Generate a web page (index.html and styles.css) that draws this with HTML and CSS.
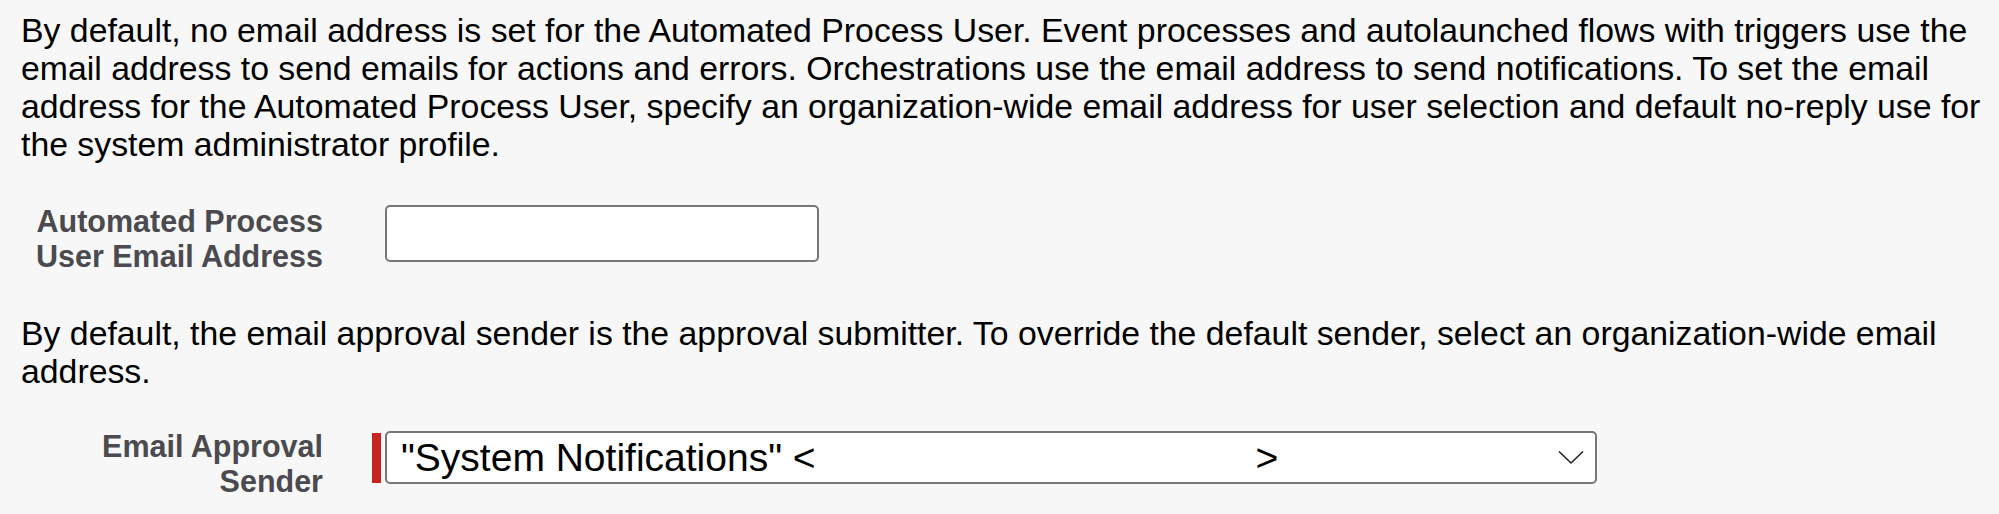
FILE: index.html
```html
<!DOCTYPE html>
<html lang="en">
<head>
  <meta charset="UTF-8" />
  <title>Organization Email Settings</title>
  <link rel="stylesheet" href="styles.css">
</head>
<body>
  <div class="settings">
    <p class="help">By default, no email address is set for the Automated Process User. Event processes and autolaunched flows with triggers use the email address to send emails for actions and errors. Orchestrations use the email address to send notifications. To set the email address for the Automated Process User, specify an organization-wide email address for user selection and default no-reply use for the system administrator profile.</p>

    <div class="field-row">
      <label class="field-label" for="apuEmail">Automated Process User Email Address</label>
      <div class="field-control">
        <input type="text" id="apuEmail" class="text-input">
      </div>
    </div>

    <p class="help">By default, the email approval sender is the approval submitter. To override the default sender, select an organization-wide email address.</p>

    <div class="field-row">
      <label class="field-label">Email Approval Sender</label>
      <div class="field-control required">
        <span class="required-bar"></span>
        <div class="select-box">
          <span class="select-value">"System Notifications" &lt;<span class="addr"></span>&gt;</span>
          <svg class="chevron" width="26" height="15" viewBox="0 0 26 15">
            <path d="M1 1.5 L13 13 L25 1.5" fill="none" stroke="#222" stroke-width="1.6"/>
          </svg>
        </div>
      </div>
    </div>
  </div>
</body>
</html>
```

FILE: styles.css
```css
* { box-sizing: border-box; }
body {
  margin: 0;
  background: #f7f7f7;
  color: #000;
  font-family: "Liberation Sans", Arial, sans-serif;
}
.settings {
  padding: 11px 0 0 21px;
}
.help {
  margin: 0;
  width: 1978px;
  font-size: 33.8px;
  line-height: 38px;
}
.field-row {
  display: flex;
  align-items: flex-start;
  margin: 41px 0 40px;
}
.field-row:last-child {
  margin-top: 39px;
}
.field-label {
  width: 302px;
  text-align: right;
  font-weight: bold;
  font-size: 30.5px;
  line-height: 35px;
  color: #4a4a4f;
}
.field-control {
  display: flex;
  align-items: center;
  margin-left: 62px;
  padding-top: 1px;
}
.field-control.required {
  margin-left: 49px;
  padding-top: 2px;
}
.text-input {
  width: 434px;
  height: 57px;
  margin: 0;
  border: 2px solid #777;
  border-radius: 5px;
  background: #fff;
  font-size: 28px;
  padding: 0 12px;
  outline: none;
}
.required-bar {
  width: 9px;
  height: 50px;
  background: #c8231f;
  margin-right: 4px;
}
.select-box {
  width: 1212px;
  height: 53px;
  border: 2px solid #777;
  border-radius: 5px;
  background: #fff;
  display: flex;
  align-items: center;
  justify-content: space-between;
  padding: 0 11px 0 14px;
}
.select-value {
  font-size: 39px;
  line-height: 49px;
  white-space: nowrap;
}
.addr {
  display: inline-block;
  width: 440px;
}
.chevron {
  display: block;
}
```
